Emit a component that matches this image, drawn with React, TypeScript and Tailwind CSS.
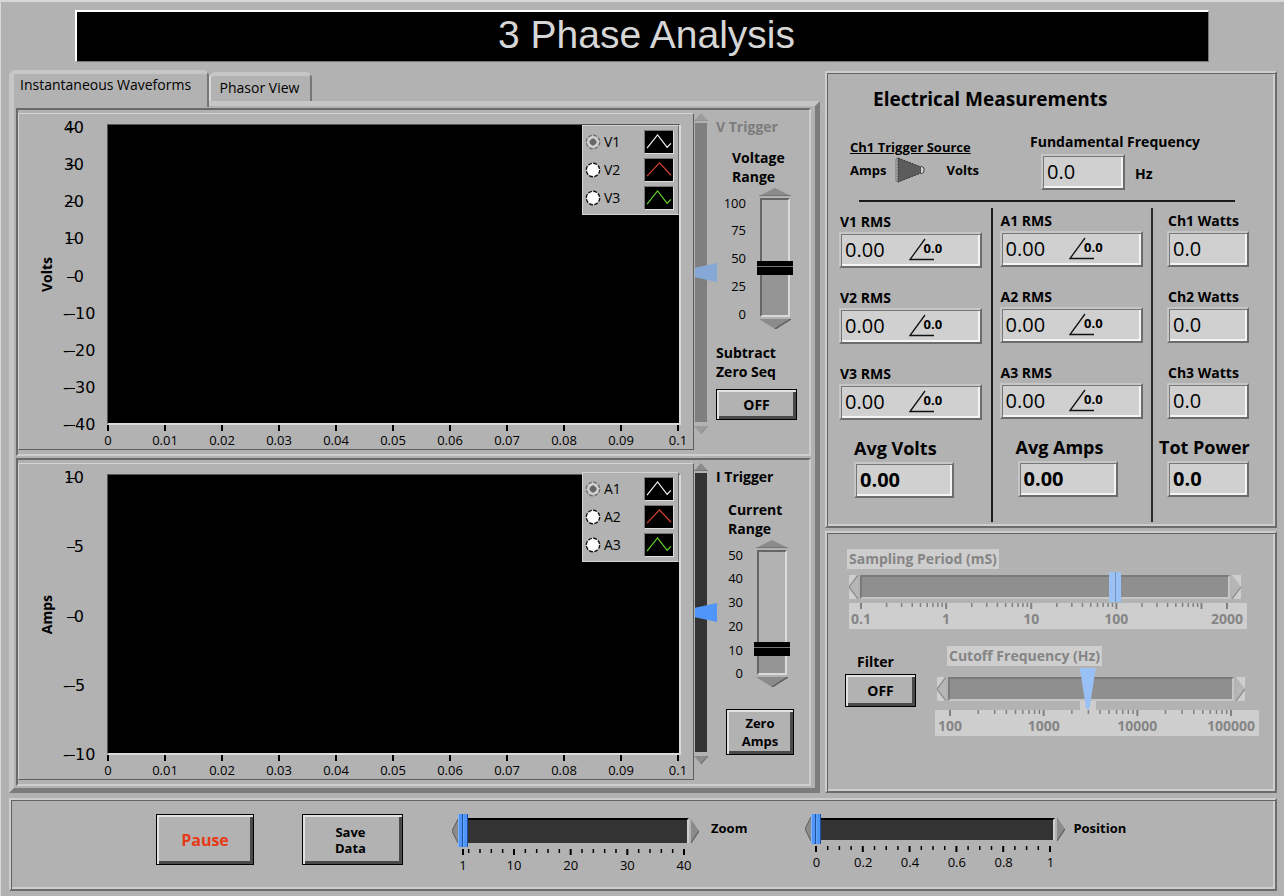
import { useState, type CSSProperties, type ReactNode } from "react";

const PANEL =
  "border-2 border-t-[#cecece] border-l-[#cecece] border-r-[#6c6c6c] border-b-[#6c6c6c] shadow-[inset_1px_1px_0_#626262,inset_-2px_-2px_0_#cecece]";
const BUTTON =
  "border border-black text-center font-bold shadow-[inset_2px_2px_0_#e2e2e2,inset_-3px_-3px_0_#4a4a4a]";
const FIELD =
  "flex h-9 items-center border-2 border-t-[#c6c6c6] border-l-[#c6c6c6] border-r-[#6c6c6c] border-b-[#6c6c6c] bg-[#d0d0d0] pl-1 shadow-[inset_1px_1px_0_#777777,inset_-2px_-2px_0_#f4f4f4]";

type Direction = "up" | "down" | "left" | "right";

const ARROWS: Record<Direction, { fill: string; edge: string }> = {
  up: { fill: "0,9 8,0 16,9", edge: "0,9 16,9" },
  down: { fill: "0,0 16,0 8,9", edge: "8,9 16,0" },
  left: { fill: "9,0 0,8 9,16", edge: "9,0 0,8 9,16" },
  right: { fill: "0,0 9,8 0,16", edge: "9,8 0,16" },
};

function Arrow({ dir, className, label, pale }: { dir: Direction; className: string; label: string; pale?: boolean }) {
  const flat = dir === "up" || dir === "down";
  const paleFill = flat ? "#9c9c9c" : "#b6b6b6";
  return (
    <button type="button" aria-label={label} className={`block shrink-0 ${className}`}>
      <svg viewBox={flat ? "0 0 16 9" : "0 0 9 16"} preserveAspectRatio="none" className="block h-full w-full">
        <polygon points={ARROWS[dir].fill} fill={pale ? paleFill : "#8b8b8b"} />
        <polyline points={ARROWS[dir].edge} fill="none" stroke={pale ? "#8a8a8a" : "#5a5a5a"} strokeWidth="1" />
      </svg>
    </button>
  );
}

function HLabels({ items, className }: { items: [string, number][]; className: string }) {
  return (
    <div className={`flex ${className}`}>
      {items.map(([text, gap], i) => (
        <div key={i} className="flex" style={{ flexGrow: gap }}>
          <span className="flex w-0 justify-center whitespace-nowrap">{text}</span>
        </div>
      ))}
    </div>
  );
}

function Ticks({ major, minor, className }: { major: number[]; minor: number[]; className: string }) {
  return (
    <svg aria-hidden="true" className={`block h-1.5 w-full overflow-visible ${className}`}>
      {major.map((p) => (
        <line key={p} x1={`${p}%`} x2={`${p}%`} y1="0" y2="6" stroke="currentColor" strokeWidth="2" />
      ))}
      {minor.map((p) => (
        <line key={p} x1={`${p}%`} x2={`${p}%`} y1="0" y2="4" stroke="currentColor" strokeWidth="1.5" />
      ))}
    </svg>
  );
}

const range = (n: number) => Array.from({ length: n }, (_, i) => i);

function logTicks(span: number) {
  return range(Math.ceil(span))
    .flatMap((d) => [2, 3, 4, 5, 6, 7, 8, 9].map((m) => d + Math.log10(m)))
    .filter((v) => v < span - 0.01)
    .map((v) => (v / span) * 100);
}

const WAVES = [
  { color: "#f4f4f4", points: "2,18 13,4 23,17 27,13" },
  { color: "#d9432f", points: "2,18 15,4 27,17" },
  { color: "#62d32b", points: "2,18 13,4 23,17 27,13" },
];

function Legend({ letter, top }: { letter: string; top: string }) {
  return (
    <div className={`absolute right-0 ${top} flex w-[97px] flex-col gap-1 border border-t-[#d4d4d4] border-l-[#d4d4d4] border-r-[#6c6c6c] border-b-[#d4d4d4] bg-[#b2b2b2] py-1 pr-1 pl-0.5`}>
      {WAVES.map((w, i) => (
        <label key={i} className="flex h-6 items-center text-sm">
          <span className="grid h-4 w-4 shrink-0">
            <input type="radio" name={letter} defaultChecked={i === 0} className="col-start-1 row-start-1 appearance-none" />
            <svg viewBox="0 0 16 16" className="pointer-events-none col-start-1 row-start-1 h-4 w-4">
              <circle cx="8" cy="8" r="6.7" fill={i === 0 ? "#d0d0d0" : "#ffffff"} stroke={i === 0 ? "#6e6e6e" : "#111111"} strokeWidth="1.4" strokeDasharray="3.9 1.36" />
              {i === 0 && <path d="M7 4.5h2l2.500 2.500v2l-2.500 2.500H7L4.500 9V7z" fill="#666666" />}
            </svg>
          </span>
          <span className="ml-[3px] flex-1">{letter + (i + 1)}</span>
          <svg viewBox="0 0 29 23" className="h-6 w-[30px] border border-t-[#777777] border-l-[#777777] border-r-[#dddddd] border-b-[#dddddd] bg-black">
            <polyline points={w.points} fill="none" stroke={w.color} strokeWidth="1.2" />
          </svg>
        </label>
      ))}
    </div>
  );
}

function Plot({ name, letter, ys, height, legendTop }: { name: string; letter: string; ys: number[]; height: string; legendTop: string }) {
  return (
    <div className="flex flex-1 flex-col border border-t-[#d4d4d4] border-l-[#d4d4d4] border-r-[#5f5f5f] border-b-[#5f5f5f] pt-2.5 pr-3">
      <div className="flex">
        <div className="flex w-11 items-center justify-center pl-3">
          <span className="rotate-180 text-sm font-bold [writing-mode:vertical-rl]">{name}</span>
        </div>
        <div className="-mt-1 -mb-2 flex w-11 flex-col justify-between font-['DejaVu_Sans',sans-serif] text-base leading-4">
          {ys.map((y) => (
            <div key={y} className="relative flex h-4">
              {y < 0 ? <span className="w-3">-</span> : null}
              <span className={y < 0 ? "" : "w-[21px] text-right"}>{Math.abs(y)}</span>
              <span className="absolute top-2 left-1 h-px w-2 bg-black" />
            </div>
          ))}
        </div>
        <div className={`relative flex-1 border-t border-r-2 border-b-2 border-l border-t-[#555555] border-r-[#dadada] border-b-[#dadada] border-l-[#555555] bg-black ${height}`}>
          <Legend letter={letter} top={legendTop} />
        </div>
      </div>
      <div className="mr-[3px] ml-[89px]">
        <Ticks major={range(11).map((i) => i * 10)} minor={[]} className="text-black" />
        <HLabels
          className="text-[13px] leading-[18px]"
          items={range(11).map((i) => [String(i / 100), i < 10 ? 1 : 0] as [string, number])}
        />
      </div>
    </div>
  );
}

function Trigger({ label, active }: { label: string; active: boolean }) {
  return (
    <div className="flex w-[14px] shrink-0 flex-col items-center pb-4">
      <Arrow dir="up" className="h-2 w-3.5" label={`${label} up`} pale={!active} />
      <input
        type="range"
        aria-label={label}
        disabled={!active}
        defaultValue={50}
        className={`mt-0.5 mb-1 min-h-0 w-3 flex-1 appearance-none bg-transparent [direction:rtl] [writing-mode:vertical-lr] [&::-webkit-slider-runnable-track]:h-full [&::-webkit-slider-runnable-track]:w-3 [&::-webkit-slider-thumb]:h-[19px] [&::-webkit-slider-thumb]:w-[22px] [&::-webkit-slider-thumb]:appearance-none [&::-webkit-slider-thumb]:[clip-path:polygon(0_25%,100%_0,100%_100%,0_75%)] ${
          active
            ? "[&::-webkit-slider-runnable-track]:bg-[#333333] [&::-webkit-slider-thumb]:bg-[#4f95fa]"
            : "[&::-webkit-slider-runnable-track]:bg-[#7f7f7f] [&::-webkit-slider-thumb]:bg-[#86a8d6]"
        }`}
      />
      <Arrow dir="down" className="h-2 w-3.5" label={`${label} down`} pale={!active} />
    </div>
  );
}

function VerticalRange({ label, values, initial, height, pad }: { label: string; values: number[]; initial: number; height: string; pad: string }) {
  const [value, setValue] = useState(initial);
  return (
    <div className="flex items-center">
      <div className={`flex w-[30px] flex-col justify-between text-[13px] ${pad} ${height}`}>
        {values.map((v) => (
          <span key={v} className="flex h-0 items-center justify-end">{v}</span>
        ))}
      </div>
      <div className="ml-[11px] flex flex-col items-center gap-0.5">
        <Arrow dir="up" className="h-2 w-8" label={`${label} up`} />
        <input
          type="range"
          aria-label={label}
          value={value}
          onChange={(e) => setValue(Number(e.target.value))}
          style={{ "--fill": `${value}%` } as CSSProperties}
          className={`w-9 appearance-none bg-transparent [direction:rtl] [writing-mode:vertical-lr] [&::-webkit-slider-runnable-track]:h-full [&::-webkit-slider-runnable-track]:w-[30px] [&::-webkit-slider-runnable-track]:border-2 [&::-webkit-slider-runnable-track]:border-t-[#666666] [&::-webkit-slider-runnable-track]:border-r-[#dadada] [&::-webkit-slider-runnable-track]:border-b-[#dadada] [&::-webkit-slider-runnable-track]:border-l-[#666666] [&::-webkit-slider-runnable-track]:[background:linear-gradient(to_top,#959595_var(--fill),#b2b2b2_var(--fill))] [&::-webkit-slider-thumb]:-ml-[5px] [&::-webkit-slider-thumb]:h-3.5 [&::-webkit-slider-thumb]:w-9 [&::-webkit-slider-thumb]:appearance-none [&::-webkit-slider-thumb]:[background:linear-gradient(#000_5px,#777_5px,#777_6px,#000_6px)] ${height}`}
        />
        <Arrow dir="down" className="h-2.5 w-8" label={`${label} down`} />
      </div>
    </div>
  );
}

function Angle() {
  return (
    <span className="flex items-center">
      <svg viewBox="0 0 26 24" className="h-6 w-[26px]" fill="none" stroke="#111111" strokeWidth="1.3">
        <path d="M16 1L1 21.5H25" />
      </svg>
      <span className="-ml-[11px] pb-1 text-[13px] leading-4 font-bold">0.0</span>
    </span>
  );
}

function Reading({ label, angle, value }: { label: string; angle?: boolean; value: string }) {
  return (
    <label className="block">
      <span className="block pl-px text-sm leading-5 font-bold">{label}</span>
      <output className={`${FIELD} ${angle ? "w-[143px] gap-6" : "w-[82px]"} text-xl`}>
        <span>{value}</span>
        {angle && <Angle />}
      </output>
    </label>
  );
}

function Total({ label, value, box, shift }: { label: string; value: string; box: string; shift: string }) {
  return (
    <label className={`-mt-1.5 block whitespace-nowrap ${box}`}>
      <span className={`block text-lg leading-7 font-bold ${shift}`}>{label}</span>
      <output className={`${FIELD} text-xl font-bold`}>{value}</output>
    </label>
  );
}

function DisabledSlider({
  label, labelClass, rowClass, value, inputClass, labels, span, pointer, scaleClass, tickPad,
}: {
  label: string; labelClass: string; rowClass: string; value: number; inputClass: string; labels: [string, number][];
  span: number; pointer?: number; scaleClass: string; tickPad: string;
}) {
  return (
    <div className="text-sm font-bold text-[#858585]">
      <label className={`block w-fit bg-[#cecece] px-0.5 leading-5 ${labelClass}`}>{label}</label>
      <div className={`flex items-center gap-0.5 ${rowClass}`}>
        <Arrow dir="left" className="h-6 w-[9px] bg-[#cecece]" label={`${label} down`} pale />
        <input
          type="range"
          aria-label={label}
          disabled
          defaultValue={value}
          step="0.1"
          className={`relative z-10 min-w-0 flex-1 appearance-none bg-transparent [&::-webkit-slider-runnable-track]:h-6 [&::-webkit-slider-runnable-track]:border-2 [&::-webkit-slider-runnable-track]:border-t-[#7a7a7a] [&::-webkit-slider-runnable-track]:border-r-[#c6c6c6] [&::-webkit-slider-runnable-track]:border-b-[#c6c6c6] [&::-webkit-slider-runnable-track]:border-l-[#7a7a7a] [&::-webkit-slider-runnable-track]:bg-[#8f8f8f] [&::-webkit-slider-thumb]:appearance-none ${inputClass}`}
        />
        <Arrow dir="right" className="h-6 w-[9px] bg-[#cecece]" label={`${label} up`} pale />
      </div>
      {pointer !== undefined && (
        <div className="-mt-[9px] mr-7 ml-[15px] flex h-[9px]">
          <div style={{ flexGrow: pointer }} />
          <span className="flex w-0 justify-center">
            <span className="w-4 shrink-0 bg-[#cecece]" />
          </span>
          <div style={{ flexGrow: 100 - pointer }} />
        </div>
      )}
      <div className={`bg-[#cecece] ${scaleClass}`}>
        <div className={tickPad}>
          <Ticks
            major={[...range(Math.ceil(span)).map((d) => (d / span) * 100), 100]}
            minor={logTicks(span)}
            className="text-[#808080]"
          />
          <HLabels className="leading-5" items={labels} />
        </div>
      </div>
    </div>
  );
}

function ViewSlider({
  label, width, gap, inputClass, major, minor, labels,
}: {
  label: string; width: string; gap: string; inputClass: string; major: number[]; minor: number[]; labels: [string, number][];
}) {
  return (
    <div className={`flex ${gap}`}>
      <div className={width}>
        <div className="flex items-center">
          <Arrow dir="left" className="h-6 w-1.5" label={`${label} down`} />
          <input
            id={label}
            type="range"
            defaultValue={0}
            className={`min-w-0 flex-1 appearance-none bg-transparent [&::-webkit-slider-runnable-track]:border-t-2 [&::-webkit-slider-runnable-track]:border-r-2 [&::-webkit-slider-runnable-track]:border-t-black [&::-webkit-slider-runnable-track]:border-r-[#cecece] [&::-webkit-slider-runnable-track]:bg-[#333333] [&::-webkit-slider-thumb]:-mt-1.5 [&::-webkit-slider-thumb]:w-2.5 [&::-webkit-slider-thumb]:appearance-none [&::-webkit-slider-thumb]:[background:linear-gradient(90deg,#7fb4ff_1px,#4f95fa_1px,#4f95fa_4px,#1c4fa0_4px,#1c4fa0_5px,#7fb4ff_5px,#4f95fa_6px,#4f95fa_9px,#1c4fa0_9px)] ${inputClass}`}
          />
          <Arrow dir="right" className="ml-0.5 h-6 w-2" label={`${label} up`} />
        </div>
        <div className="mt-0.5 mr-[15px] ml-[11px]">
          <Ticks major={major} minor={minor} className="text-black" />
          <HLabels className="text-[13px] leading-5" items={labels} />
        </div>
      </div>
      <label htmlFor={label} className="mt-1 text-[13px] leading-5 font-bold">{label}</label>
    </div>
  );
}

function Chart({ children, pad }: { children: ReactNode; pad: string }) {
  return (
    <div className={`flex border-2 border-t-[#6a6a6a] border-l-[#6a6a6a] border-r-[#cecece] border-b-[#cecece] pt-[3px] ${pad}`}>
      {children}
    </div>
  );
}

export default function App() {
  return (
    <div className="flex min-h-screen flex-col border-t-2 border-l border-t-[#d8d8d8] border-l-[#d8d8d8] bg-[#b2b2b2] pt-2 pr-[7px] pb-1.5 pl-2 font-['Open_Sans','Noto_Sans',sans-serif] text-black">
      <h1 className="mr-[68px] ml-[66px] h-[52px] border-t-2 border-r border-b border-l-2 border-t-white border-r-[#777777] border-b-[#777777] border-l-white bg-black pl-2 text-center font-['Liberation_Sans',sans-serif] text-[39px] leading-[46px] text-[#d6d6d6]">
        3 Phase Analysis
      </h1>

      <main className="mt-2 flex gap-[5px]">
        <section className="flex min-w-0 flex-1 flex-col">
          <div role="tablist" className="relative flex items-start text-sm">
            <button role="tab" aria-selected="true" type="button" className="-mb-1.5 h-[37px] w-[200px] rounded-t-md border-t-4 border-r-2 border-l-[5px] border-t-[#c6c6c6] border-r-[#777777] border-l-[#c6c6c6] bg-[#b2b2b2] pb-3 pl-1.5 text-left">
              Instantaneous Waveforms
            </button>
            <button role="tab" aria-selected="false" type="button" className="mt-0.5 h-[29px] w-[103px] rounded-t-md border-t-4 border-r-2 border-l-2 border-t-[#c6c6c6] border-r-[#777777] border-l-[#d8d8d8] pr-0.5 pb-0.5 text-center">
              Phasor View
            </button>
          </div>
          <div className="flex flex-1 flex-col gap-0.5 border-[5px] border-t-[#c6c6c6] border-r-[#7c7c7c] border-b-[#7c7c7c] border-l-[#c6c6c6] py-0.5 pr-1 pl-0.5">
            <Chart pad="pb-1">
              <Plot name="Volts" letter="V" ys={[40, 30, 20, 10, 0, -10, -20, -30, -40]} height="h-[301px]" legendTop="top-0" />
              <Trigger label="V Trigger" active={false} />
              <div className="flex w-[101px] shrink-0 flex-col pl-2 text-sm leading-[19px] font-bold">
                <span className="mt-1 text-[#7c7c7c]">V Trigger</span>
                <span className="mt-3 mb-0.5 ml-4">Voltage<br />Range</span>
                <div className="font-normal">
                  <VerticalRange label="Voltage Range" values={[100, 75, 50, 25, 0]} initial={40} height="h-[119px]" pad="py-1" />
                </div>
                <span className="mt-3.5">Subtract<br />Zero Seq</span>
                <button type="button" className={`${BUTTON} mt-2 h-[31px] w-[81px]`}>OFF</button>
              </div>
            </Chart>
            <Chart pad="pb-1">
              <Plot name="Amps" letter="A" ys={[10, 5, 0, -5, -10]} height="h-[281px]" legendTop="-top-[3px]" />
              <Trigger label="I Trigger" active />
              <div className="flex w-[101px] shrink-0 flex-col pl-2 text-sm leading-[19px] font-bold">
                <span className="mt-1">I Trigger</span>
                <span className="mt-3.5 mb-0.5 ml-3">Current<br />Range</span>
                <div className="-ml-[3px] font-normal">
                  <VerticalRange label="Current Range" values={[50, 40, 30, 20, 10, 0]} initial={16} height="h-[125px]" pad="pt-1 pb-0.5" />
                </div>
                <button type="button" className={`${BUTTON} mt-[22px] ml-2.5 h-[46px] w-[68px] text-[13px] leading-[18px]`}>Zero<br />Amps</button>
              </div>
            </Chart>
          </div>
        </section>

        <aside className="flex w-[452px] shrink-0 flex-col gap-[3px] pt-px">
          <section className={`${PANEL} h-[457px] pt-3`}>
            <h2 className="ml-[46px] text-[19px] leading-7 font-bold">Electrical Measurements</h2>
            <div className="ml-[23px] flex text-[13px] font-bold">
              <div className="mt-[25px] w-[180px]">
                <div className="leading-[18px] underline">Ch1 Trigger Source</div>
                <div className="flex items-center leading-7">
                  <span>Amps</span>
                  <button type="button" role="switch" aria-checked="false" aria-label="Ch1 Trigger Source" className="ml-2">
                    <svg viewBox="0 0 32 26" className="block h-[26px] w-8">
                      <path d="M2 2l3-1v24l-3-1z" fill="#b8b8b8" stroke="#777777" />
                      <path d="M4 1L27 10v6L4 25z" fill="#5c5c5c" stroke="#333333" strokeDasharray="2 1" />
                      <path d="M27 9l3 2v4l-3 2" fill="#d0d0d0" stroke="#444444" />
                    </svg>
                  </button>
                  <span className="ml-5">Volts</span>
                </div>
              </div>
              <div className="mt-[17px]">
                <label htmlFor="fundamental" className="block text-sm leading-6">Fundamental Frequency</label>
                <div className="flex items-center">
                  <output id="fundamental" className={`${FIELD} ml-[11px] w-[84px] text-xl font-normal`}>0.0</output>
                  <span className="mt-1 ml-2.5 text-sm">Hz</span>
                </div>
              </div>
            </div>
            <hr className="mt-2.5 mr-10 ml-8 border-t-2 border-[#1a1a1a]" />
            <div className="mt-1.5 flex">
              <div className="flex h-[314px] flex-1 flex-col gap-5 border-r-2 border-[#1a1a1a] pt-1 pl-3">
                <Reading label="V1 RMS" value="0.00" angle />
                <Reading label="V2 RMS" value="0.00" angle />
                <Reading label="V3 RMS" value="0.00" angle />
                <Total label="Avg Volts" value="0.00" box="ml-[15px] w-[100px]" shift="" />
              </div>
              <div className="flex flex-1 flex-col gap-5 border-r-2 border-[#2a2a2a] pt-[3px] pl-[7px]">
                <Reading label="A1 RMS" value="0.00" angle />
                <Reading label="A2 RMS" value="0.00" angle />
                <Reading label="A3 RMS" value="0.00" angle />
                <Total label="Avg Amps" value="0.00" box="ml-[18px] w-[100px]" shift="-ml-0.5" />
              </div>
              <div className="flex w-[122px] flex-col gap-5 pt-[3px] pl-3.5">
                <Reading label="Ch1 Watts" value="0.0" />
                <Reading label="Ch2 Watts" value="0.0" />
                <Reading label="Ch3 Watts" value="0.0" />
                <Total label="Tot Power" value="0.0" box="w-[82px]" shift="-ml-2" />
              </div>
            </div>
          </section>

          <section className={`${PANEL} flex-1 pt-4`}>
            <div className="mr-7 ml-5">
              <DisabledSlider
                label="Sampling Period (mS)"
                labelClass="mb-0.5"
                rowClass="ml-0.5 mr-1.5"
                value={69.9}
                inputClass="h-8 [&::-webkit-slider-thumb]:-mt-[5px] [&::-webkit-slider-thumb]:h-[30px] [&::-webkit-slider-thumb]:w-3 [&::-webkit-slider-thumb]:[background:linear-gradient(90deg,#9ac1f5_5px,#e4efff_5px,#6c94c8_6px,#6c94c8_7px,#9ac1f5_7px)]"
                labels={[["0.1", 1], ["1", 1], ["10", 1], ["100", 1.3], ["2000", 0]]}
                span={4.3}
                scaleClass="ml-0.5"
                tickPad="mr-5 ml-3"
              />
            </div>
            <div className="mt-[17px] mr-4 ml-[18px] flex">
              <div className="mt-1 w-[71px] text-sm font-bold">
                <div className="pl-3 leading-6">Filter</div>
                <button type="button" className={`${BUTTON} h-[33px] w-full`}>OFF</button>
              </div>
              <div className="ml-[19px] flex-1">
                <DisabledSlider
                  label="Cutoff Frequency (Hz)"
                  labelClass="mb-0.5 ml-3"
                  rowClass="ml-0.5 mr-3.5"
                  value={48.8}
                  pointer={49.2}
                  inputClass="h-[42px] [&::-webkit-slider-thumb]:-mt-[11px] [&::-webkit-slider-thumb]:h-[41px] [&::-webkit-slider-thumb]:w-4 [&::-webkit-slider-thumb]:bg-[#9ac1f5] [&::-webkit-slider-thumb]:[clip-path:polygon(0_0,100%_0,60%_100%,40%_100%)]"
                  labels={[["100", 1], ["1000", 1], ["10000", 1], ["100000", 0]]}
                  span={3}
                  scaleClass=""
                  tickPad="mr-7 ml-[15px]"
                />
              </div>
            </div>
          </section>
        </aside>
      </main>

      <footer className={`${PANEL} mt-[5px] flex h-[93px] items-start pt-3.5 pl-[145px]`}>
        <button type="button" className={`${BUTTON} h-[51px] w-[98px] text-base text-[#e63a17]`}>Pause</button>
        <button type="button" className={`${BUTTON} ml-12 h-[51px] w-[101px] pr-1 text-[13px] leading-4`}>Save<br />Data</button>
        <div className="ml-[49px]">
          <ViewSlider
            label="Zoom"
            width="w-[247px]"
            gap="gap-3"
            inputClass="h-[33px] [&::-webkit-slider-runnable-track]:h-[25px] [&::-webkit-slider-thumb]:h-[33px]"
            major={[0, 9, 19, 29, 39].map((v) => (v / 39) * 100)}
            minor={range(20).map((i) => i * 2 + 1).filter((v) => ![9, 19, 29, 39].includes(v)).map((v) => (v / 39) * 100)}
            labels={[["1", 9], ["10", 10], ["20", 10], ["30", 10], ["40", 0]]}
          />
        </div>
        <div className="ml-[58px]">
          <ViewSlider
            label="Position"
            width="w-[260px]"
            gap="gap-2"
            inputClass="h-[30px] [&::-webkit-slider-runnable-track]:h-[22px] [&::-webkit-slider-thumb]:h-[30px]"
            major={[0, 20, 40, 60, 80, 100]}
            minor={range(20).filter((i) => i % 4).map((i) => i * 5)}
            labels={[["0", 1], ["0.2", 1], ["0.4", 1], ["0.6", 1], ["0.8", 1], ["1", 0]]}
          />
        </div>
      </footer>
    </div>
  );
}
